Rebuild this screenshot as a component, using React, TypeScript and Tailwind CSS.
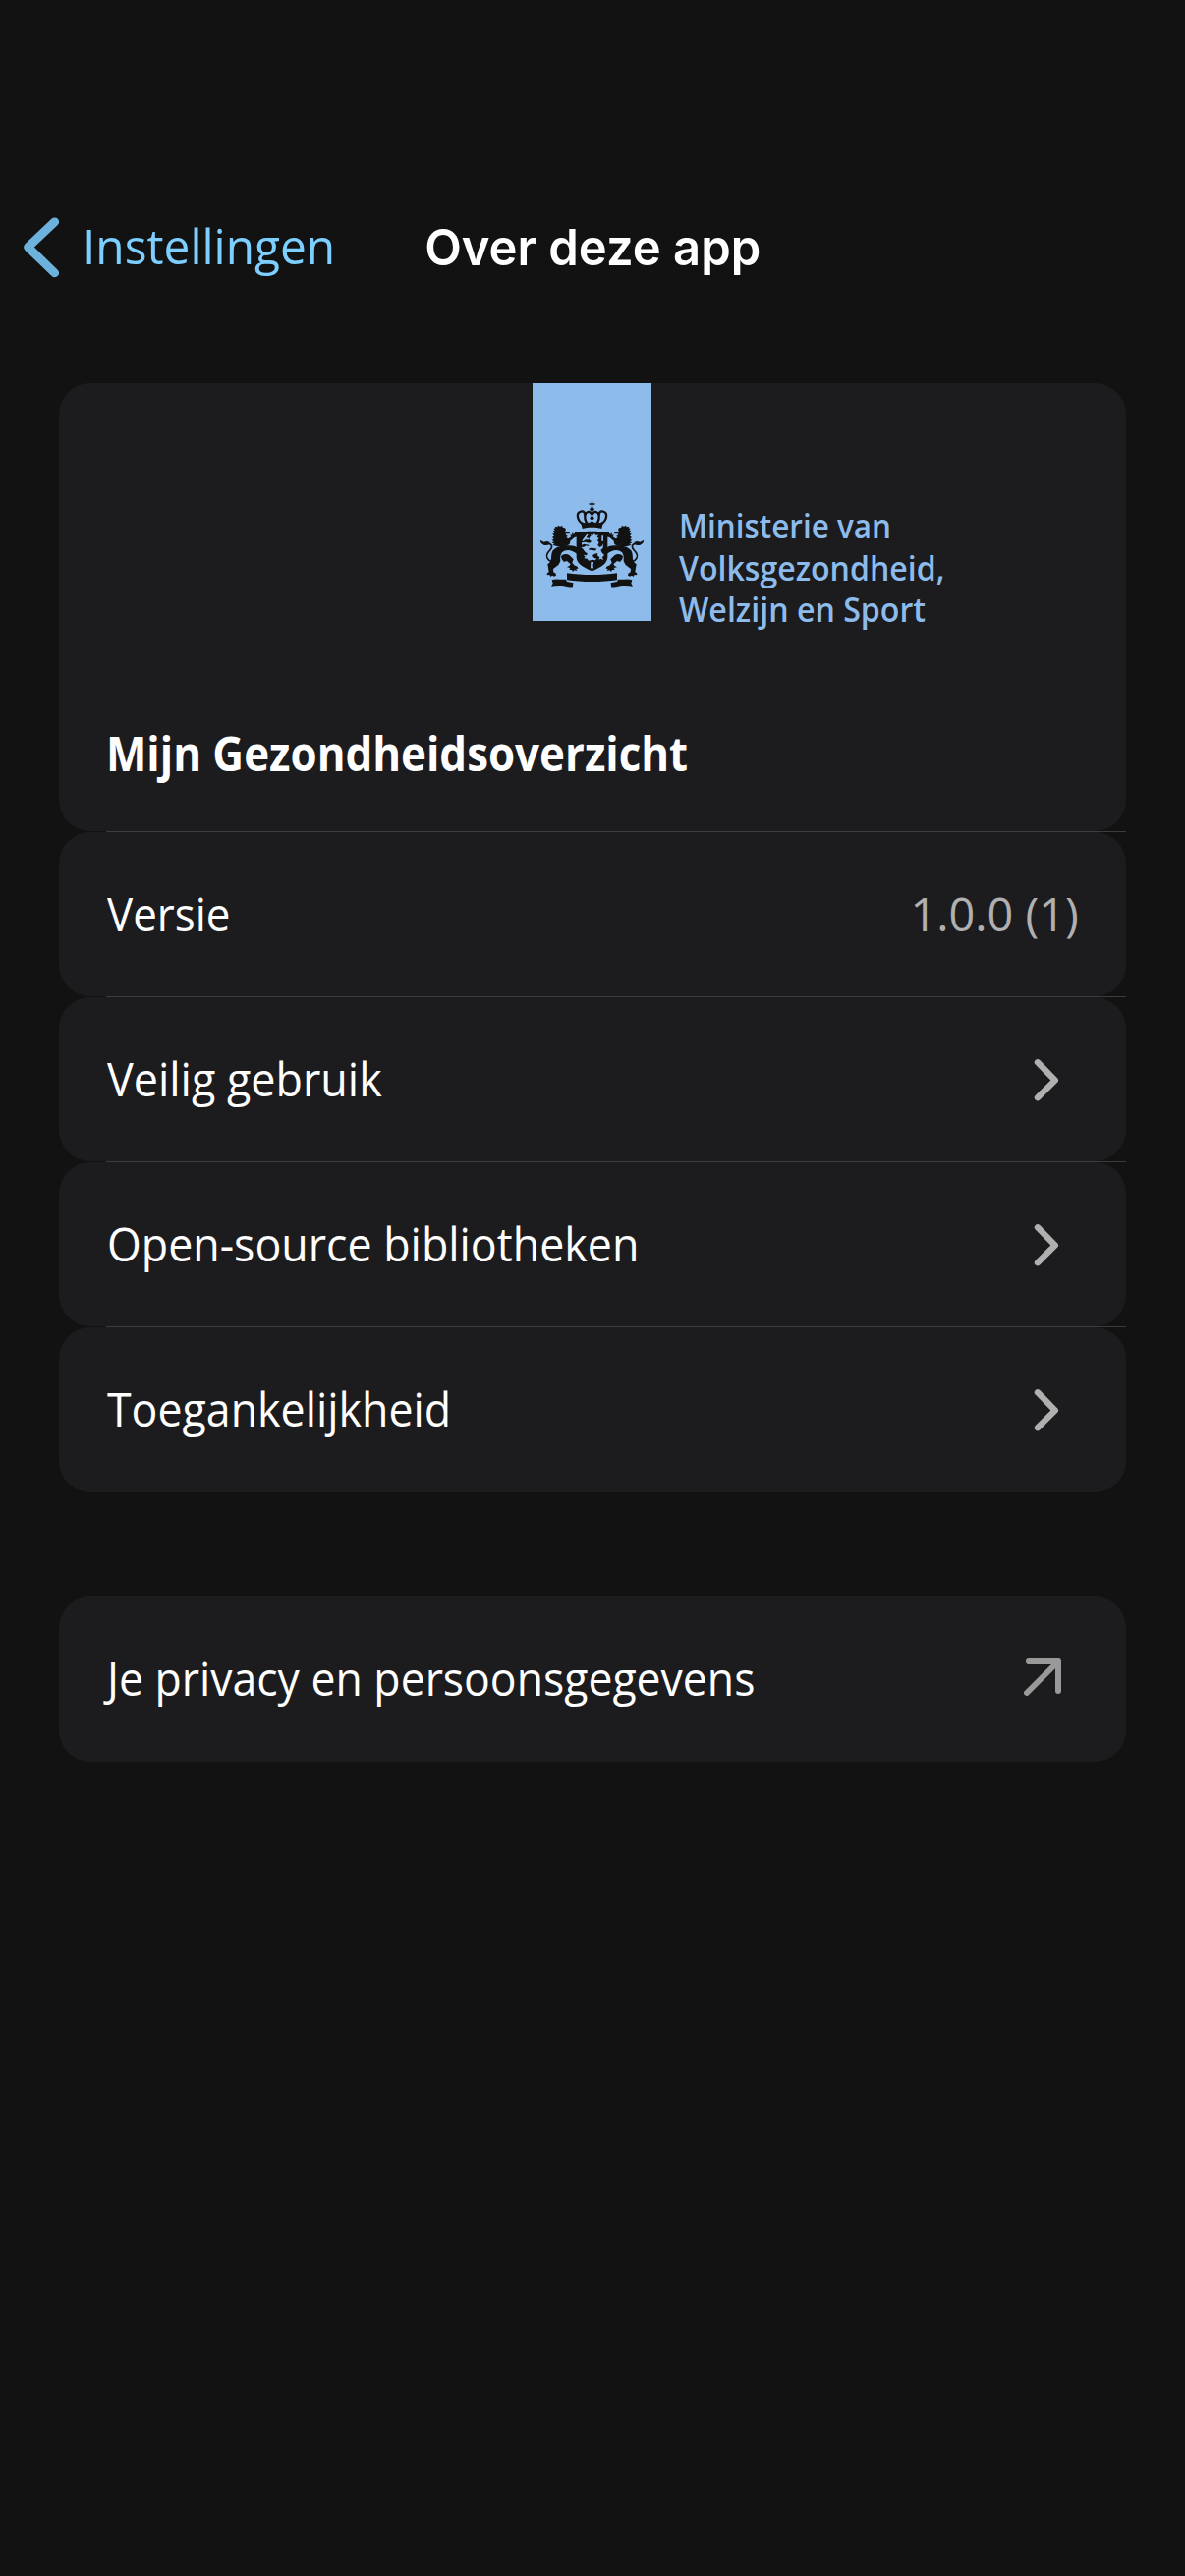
import type { ReactNode } from 'react';

const INK = '#121212';
const SKY = '#8dbcec';

function Lion() {
  return (
    <g fill={INK}>
      {/* head, mane and chest */}
      <path d="M55 99 L61 97 L59 92 L67 94 L69 89 L75 92 L82 90 L83 95 L90 97 L93 103 L90 108 L98 111 L106 110 L103 115 L92 115 L94 120 L99 122 L94 126 L103 132 L106 139 L104 147 L94 152 L68 154 L52 149 L58 146 L50 142 L56 139 L50 134 L56 131 L51 125 L57 122 L52 115 L58 113 L53 107 L59 104 Z" />
      {/* raised foreleg */}
      <path d="M96 133 L109 124 L105 118 L112 119 L111 112 L118 116 L121 109 L128 112 L128 124 L119 126 L104 139 Z" />
      {/* body with hind leg */}
      <path d="M104 151 C84 149 62 154 53 166 C45 181 52 189 44 202 L37 208 L41 231 L34 237 L37 241 L43 240 L46 246 L51 242 L57 245 L63 242 L62 236 L55 232 L54 222 L70 210 L76 199 C75 183 76 172 88 167 C101 162 116 167 128 178 L128 158 C122 153 114 151 104 151 Z" />
      {/* inner foreleg */}
      <path d="M78 184 C84 175 98 175 106 183 L116 193 L112 203 L118 211 L128 215 L130 221 L124 222 L127 228 L119 226 L114 231 L111 225 L103 225 L106 219 L96 217 L104 212 L107 208 L96 198 L87 201 L80 193 Z" />
      {/* tail */}
      <path
        d="M50 200 C35 195 31 184 37 174 C43 164 53 160 49 150 C46 144 40 145 34 147 C26 149 24 143 16 138"
        fill="none"
        stroke={INK}
        strokeWidth="5"
      />
      <path d="M14 135 L25 140 L35 138 L45 141 L38 148 L27 150 L19 145 Z" />
    </g>
  );
}

function CoatOfArms() {
  return (
    <svg viewBox="0 0 345 300" className="h-[100px] w-[115px]" aria-label="Rijkswapen">
      <Lion />
      <g transform="translate(345 0) scale(-1 1)">
        <Lion />
      </g>

      {/* crown */}
      <g fill={INK}>
        <path d="M170.5 15 h4 v7 h7 v4 h-7 v8 h-4 v-8 h-7 v-4 h7 Z" />
        <circle cx="172.5" cy="40" r="6.5" />
        <circle cx="172.5" cy="54" r="5" />
        <circle cx="172.5" cy="67" r="6" />
        <path d="M138 78 L150 82 L155 76 L162 82 L172 76 L183 82 L190 76 L195 82 L207 78 L202 99 C184 94 161 94 143 99 Z" />
      </g>
      <g fill="none" stroke={INK} strokeWidth="7">
        <path d="M143 84 C126 72 124 51 138 47 C147 44 154 52 149 59" />
        <path d="M202 84 C219 72 221 51 207 47 C198 44 191 52 196 59" />
        <path d="M156 82 C147 67 150 51 160 48 C165 47 168 49 169 54" />
        <path d="M189 82 C198 67 195 51 185 48 C180 47 177 49 176 54" />
      </g>

      {/* shield */}
      <path d="M125 112 C155 106 190 106 220 112 L220 187 C219 207 198 219 172.5 229 C147 219 126 207 125 187 Z" fill={INK} />
      <g fill={SKY}>
        <path d="M142 136 L151 124 L157 116 L161 118 L155 127 L164 129 L163 133 L152 133 L146 138 Z" />
        <path d="M165 126 L170 121 L169 116 L176 119 L180 114 L184 120 L192 118 L188 125 L194 129 L189 135 L194 142 L190 150 L196 156 L203 152 L207 145 L206 158 L199 165 L204 174 L210 179 L204 187 L207 195 L199 191 L193 194 L196 187 L189 181 L190 174 L181 176 L174 181 L178 188 L187 191 L182 196 L174 194 L162 197 L158 191 L148 190 L152 185 L146 179 L155 181 L159 176 L150 169 L145 161 L139 156 L148 155 L155 151 L163 154 L162 149 L149 146 L141 149 L141 142 L152 140 L165 143 L171 138 L164 133 Z" />
        <path d="M202 121 h5 v16 h-5 Z" />
        <path d="M169 201 L177 201 L177 219 L172 223 L168 218 Z" />
      </g>
      <g fill={INK}>
        <path d="M163 160 C172 155 180 162 187 160 L184 166 C176 168 170 162 164 166 Z" />
        <path d="M172 206 h3 v11 h-3 Z" />
      </g>

      {/* ribbon */}
      <g fill={INK}>
        <path d="M96 235 C140 242 205 242 249 235 L249 256 C205 263 140 263 96 256 Z" />
        <path d="M50 256 C63 250 78 256 93 254 L96 261 L112 264 L115 264 L114 277 C98 280 92 273 78 273 C67 272 58 274 48 275 L53 266 Z" />
        <path d="M295 256 C282 250 267 256 252 254 L249 261 L233 264 L230 264 L231 277 C247 280 253 273 267 273 C278 272 287 274 297 275 L292 266 Z" />
      </g>
    </svg>
  );
}

function ChevronRight() {
  return (
    <svg viewBox="0 0 30 48" className="mr-[17px] h-12 w-[30px]" fill="none" stroke="#b0b0b0" strokeWidth="6.4" strokeLinecap="round" strokeLinejoin="round">
      <path d="M5 6.3 L22.8 24.5 L5 42.2" />
    </svg>
  );
}

function ArrowUpRight() {
  return (
    <svg viewBox="0 0 42 42" className="mr-[15px] size-[42px]" fill="none" stroke="#999999" strokeWidth="6" strokeLinecap="round" strokeLinejoin="round">
      <path d="M4 35 L36 3 M6 3 H36 V33" />
    </svg>
  );
}

function Row({ label, scale, height = 'h-[167px]', children }: { label: string; scale: string; height?: string; children: ReactNode }) {
  return (
    <div className={`flex items-center justify-between rounded-[32px] bg-[#1c1c1e] pr-12 pl-[49px] ${height}`}>
      <span className={`origin-left pb-[2px] text-[48px] leading-none whitespace-nowrap text-white ${scale}`}>{label}</span>
      {children}
    </div>
  );
}

function Divider() {
  return <div className="ml-12 h-px bg-[#3d3d3f]" />;
}

export default function App() {
  return (
    <main className="h-[2622px] w-[1206px] overflow-hidden bg-[#121212] px-[60px] pt-[200px] font-['Open_Sans',sans-serif]">
      <header className="-mx-[60px] grid h-[100px] grid-cols-[1fr_auto_1fr] items-center">
        <div className="flex items-center">
          <svg viewBox="0 0 40 64" className="mt-1 ml-[22px] h-16 w-10" fill="none" stroke="#6db2dc" strokeWidth="8.8" strokeLinecap="round" strokeLinejoin="round">
            <path d="M33.7 5.8 L6.5 31.5 L33.7 57.8" />
          </svg>
          <span className="ml-[22px] origin-left scale-x-[0.957] text-[50px] leading-none text-[#7dcfff]">Instellingen</span>
        </div>
        <h1 className="scale-x-[0.96] pt-[2px] font-['Inter',sans-serif] text-[51px] leading-none font-semibold whitespace-nowrap text-white">
          Over deze app
        </h1>
      </header>

      <section className="mt-[90px] flex flex-col">
        <div className="h-[456px] rounded-[32px] bg-[#1c1c1e]">
          <div className="flex h-[242px] pl-[482px]">
            <div className="flex h-[242px] w-[121px] shrink-0 items-start bg-[#8dbcec] pt-[115px] pl-[3px]">
              <CoatOfArms />
            </div>
            <div className="flex flex-col items-start pt-[124px] pl-[28px] text-[34px] leading-[42.5px] font-semibold whitespace-nowrap text-[#8dbcec]">
              <span className="origin-left scale-x-[0.925]">Ministerie van</span>
              <span className="origin-left scale-x-[0.943]">Volksgezondheid,</span>
              <span className="origin-left scale-x-[0.945]">Welzijn en Sport</span>
            </div>
          </div>
          <h2 className="mt-[111px] ml-12 origin-left scale-x-[0.914] text-[48px] leading-none font-bold whitespace-nowrap text-white">
            Mijn Gezondheidsoverzicht
          </h2>
        </div>
        <Divider />
        <Row label="Versie" scale="scale-x-[0.915]">
          <span className="origin-right scale-x-[0.975] pb-[2px] text-[48px] leading-none whitespace-nowrap text-[#b0b0b0]">1.0.0 (1)</span>
        </Row>
        <Divider />
        <Row label="Veilig gebruik" scale="scale-x-[0.935]">
          <ChevronRight />
        </Row>
        <Divider />
        <Row label="Open-source bibliotheken" scale="scale-x-[0.932]">
          <ChevronRight />
        </Row>
        <Divider />
        <Row label="Toegankelijkheid" scale="scale-x-[0.931]" height="h-[168px]">
          <ChevronRight />
        </Row>
      </section>

      <section className="mt-[106px]">
        <Row label="Je privacy en persoonsgegevens" scale="scale-x-[0.928]" height="h-[168px]">
          <ArrowUpRight />
        </Row>
      </section>
    </main>
  );
}
